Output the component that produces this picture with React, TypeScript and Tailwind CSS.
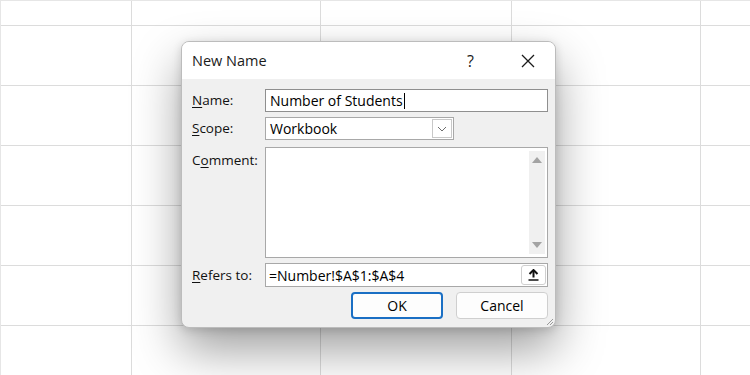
import React from "react";

const font = { fontFamily: '"Segoe UI", "Open Sans", "Noto Sans", sans-serif' };

function Grid() {
  const cols = 5;
  const rows = 7;
  const cells = [];
  for (let r = 0; r < rows; r++) {
    for (let c = 0; c < cols; c++) {
      cells.push(<div key={`${r}-${c}`} className="border-r border-b border-[#dcdcdc]" />);
    }
  }
  return (
    <div className="grid h-[375px] w-[750px] grid-cols-[131px_189px_191px_189px_50px] grid-rows-[25px_60px_60px_60px_60px_60px_50px] border-l border-t border-[#e6e6e6] bg-white">
      {cells}
    </div>
  );
}

function U({ children }: { children: React.ReactNode }) {
  return <span className="underline underline-offset-2 decoration-1">{children}</span>;
}

export default function App() {
  return (
    <div className="relative h-[375px] w-[750px] overflow-hidden bg-white" style={font}>
      <Grid />
      <div className="absolute left-[181px] top-[41px] flex h-[287px] w-[375px] flex-col overflow-hidden rounded-[8px] border border-[#bcbcbc] bg-[#f0f0f0] shadow-[0_22px_48px_rgba(0,0,0,0.38),0_2px_10px_rgba(0,0,0,0.15)]">
        {/* title bar */}
        <div className="flex h-[37px] items-center bg-white pl-[10px] pr-[20px] text-[14.5px] text-[#1b1b1b]">
          <span className="flex-1">New Name</span>
          <span className="mr-[47px] text-[16px]">?</span>
          <svg width="14" height="14" viewBox="0 0 14 14" className="text-[#1b1b1b]">
            <path d="M1 1 L13 13 M13 1 L1 13" stroke="currentColor" strokeWidth="1.3" />
          </svg>
        </div>
        {/* body */}
        <div className="relative flex flex-1 flex-col pl-[10px] pr-[7px] pt-[10px] text-[13.5px] font-medium text-[#111]">
          {/* Name */}
          <div className="flex h-[23px] items-center">
            <div className="w-[73px]"><U>N</U>ame:</div>
            <div className="flex h-[23px] flex-1 items-center border border-[#8f8f8f] bg-white px-[4px] text-[14px] text-black">
              Number of Students<span className="ml-[1px] inline-block h-[16px] w-[1px] bg-black" />
            </div>
          </div>
          {/* Scope */}
          <div className="mt-[5px] flex h-[23px] items-center">
            <div className="w-[73px]"><U>S</U>cope:</div>
            <div className="flex h-[23px] w-[189px] items-center border border-[#a8a8a8] bg-white text-[14px] text-black">
              <span className="flex-1 pl-[4px]">Workbook</span>
              <div className="m-[1px] flex h-[19px] w-[20px] items-center justify-center border border-[#c8c8c8] bg-white">
                <svg width="10" height="6" viewBox="0 0 10 6">
                  <path d="M1 1 L5 5 L9 1" fill="none" stroke="#6e6e6e" strokeWidth="1" />
                </svg>
              </div>
            </div>
          </div>
          {/* Comment */}
          <div className="mt-[7px] flex h-[111px] items-start">
            <div className="w-[73px] pt-[3px]">C<U>o</U>mment:</div>
            <div className="flex h-[111px] flex-1 border border-[#a8a8a8] bg-white">
              <div className="flex-1" />
              <div className="my-[3px] mr-[2px] flex w-[16px] flex-col items-center justify-between bg-[#f0f0f0] py-[6px]">
                <svg width="10" height="6" viewBox="0 0 10 6"><path d="M0 6 L5 0 L10 6 Z" fill="#a3a3a3" /></svg>
                <svg width="10" height="6" viewBox="0 0 10 6"><path d="M0 0 L5 6 L10 0 Z" fill="#a3a3a3" /></svg>
              </div>
            </div>
          </div>
          {/* Refers to */}
          <div className="mt-[5px] flex h-[24px] items-center">
            <div className="w-[73px]"><U>R</U>efers to:</div>
            <div className="flex h-[24px] flex-1 items-center border border-[#a8a8a8] bg-white pl-[3px] text-[14px] text-black">
              <span className="flex-1">=Number!$A$1:$A$4</span>
              <div className="mr-[1px] flex h-[20px] w-[25px] items-center justify-center rounded-[3px] border border-[#cfcfcf] bg-white">
                <svg width="11" height="12" viewBox="0 0 11 12">
                  <path d="M5.5 1 L5.5 8.5" stroke="#111" strokeWidth="2" />
                  <path d="M1.5 5 L5.5 1 L9.5 5" fill="none" stroke="#111" strokeWidth="2" />
                  <path d="M0.5 11 L10.5 11" stroke="#111" strokeWidth="1.5" />
                </svg>
              </div>
            </div>
          </div>
          {/* Buttons */}
          <div className="mt-[5px] flex h-[27px] justify-end gap-[13px] text-[14px] text-black">
            <button className="h-[27px] w-[92px] rounded-[4px] border-2 border-[#1a6fc4] bg-[#fdfdfd] font-medium">OK</button>
            <button className="h-[27px] w-[92px] rounded-[4px] border border-[#cfcfcf] bg-[#fdfdfd] font-medium">Cancel</button>
          </div>
          {/* resize grip */}
          <svg className="absolute bottom-[1px] right-[1px]" width="10" height="10" viewBox="0 0 10 10">
            <path d="M9 3 L3 9 M9 6 L6 9" stroke="#9a9a9a" strokeWidth="1" />
          </svg>
        </div>
      </div>
    </div>
  );
}
